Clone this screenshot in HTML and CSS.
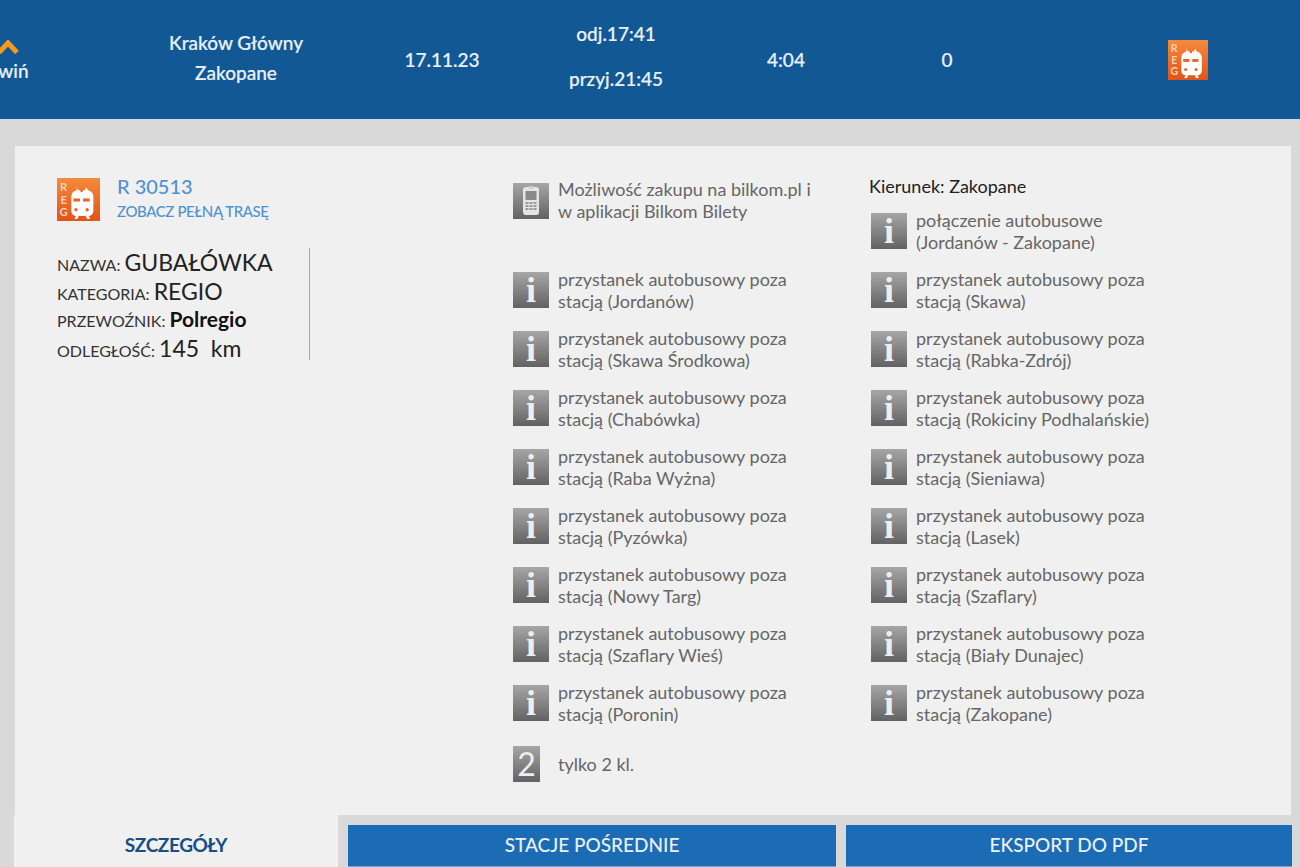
FILE: index.html
```html
<!DOCTYPE html>
<html lang="pl">
<head>
    <meta name="viewport" content="width=device-width, initial-scale=1.0">
    <meta charset="UTF-8">
    <title>Kraków Główny - Zakopane</title>
    <link rel="stylesheet" href="styles.css">
</head>
<body>
    <svg class="defs" width="0" height="0" aria-hidden="true">
        <defs>
            <linearGradient id="reg-bg" x1="0" y1="0" x2="0" y2="1">
                <stop offset="0" stop-color="#f58a3c"/>
                <stop offset="1" stop-color="#e2521a"/>
            </linearGradient>
            <symbol id="reg-icon" viewBox="0 0 42 42">
                <rect width="42" height="42" fill="url(#reg-bg)"/>
                <text x="6.5" y="13" class="reg-letter">R</text>
                <text x="6.5" y="25" class="reg-letter">E</text>
                <text x="6.5" y="37" class="reg-letter">G</text>
                <path d="M19 9l2 3h6l2-3 1 3h.5c3 1 5 3 5 6v14c0 3-2 5-4.500 5l1.500 3h-3l-1.500-3h-7L20 40h-3l1.500-3c-2.500 0-4.500-2-4.500-5V18c0-3 2-5 5-6h.500z" fill="#fff"/>
                <rect x="16" y="20" width="6.500" height="3" fill="#e8622a"/>
                <rect x="25.500" y="20" width="6.500" height="3" fill="#e8622a"/>
                <circle cx="24" cy="12.500" r="1.300" fill="#e8622a"/>
                <circle cx="18.500" cy="31" r="1.600" fill="#e8622a"/>
                <circle cx="29.500" cy="31" r="1.600" fill="#e8622a"/>
            </symbol>
        </defs>
    </svg>

    <header class="trip-bar">
        <div class="trip-cell toggle-cell">
            <svg class="chevron" width="24" height="16" viewBox="0 0 24 16">
                <path d="M3 13.500L12 4l9 9.500" fill="none" stroke="#f39a1e" stroke-width="5"/>
            </svg>
            <span>Zwiń</span>
        </div>
        <div class="trip-cell stations-cell">
            <span>Kraków Główny</span>
            <span>Zakopane</span>
        </div>
        <div class="trip-cell date-cell">17.11.23</div>
        <div class="trip-cell times-cell">
            <span>odj.17:41</span>
            <span>przyj.21:45</span>
        </div>
        <div class="trip-cell duration-cell">4:04</div>
        <div class="trip-cell changes-cell">0</div>
        <div class="trip-cell carrier-cell">
            <svg class="reg-small" width="40" height="40"><use href="#reg-icon"/></svg>
        </div>
    </header>

    <main class="details">
        <section class="train-col">
            <div class="train-head">
                <svg class="reg-big" width="43" height="43"><use href="#reg-icon"/></svg>
                <div class="train-links">
                    <a class="train-no">R 30513</a>
                    <a class="train-route">ZOBACZ PEŁNĄ TRASĘ</a>
                </div>
            </div>
            <dl class="train-info">
                <div><dt>NAZWA:</dt> <dd>GUBAŁÓWKA</dd></div>
                <div><dt>KATEGORIA:</dt> <dd>REGIO</dd></div>
                <div><dt>PRZEWOŹNIK:</dt> <dd class="carrier">Polregio</dd></div>
                <div><dt>ODLEGŁOŚĆ:</dt> <dd>145&nbsp; km</dd></div>
            </dl>
        </section>

        <section class="notes-col">
            <div class="note note-first">
                <span class="note-icon">
                    <svg width="22" height="30" viewBox="0 0 22 30">
                        <rect x="3" y="1" width="16" height="28" rx="3" fill="#e4e4e4"/>
                        <rect x="9" y="0" width="4" height="3" fill="#cfcfcf"/>
                        <rect x="5.500" y="5" width="11" height="9" fill="#8a8a8a"/>
                        <path d="M5.500 16h3v2h-3zM9.500 16h3v2h-3zM13.500 16h3v2h-3zM5.500 19h3v2h-3zM9.500 19h3v2h-3zM13.500 19h3v2h-3zM5.500 22h3v2h-3zM9.500 22h3v2h-3zM13.500 22h3v2h-3z" fill="#9a9a9a"/>
                    </svg>
                </span>
                <p>Możliwość zakupu na bilkom.pl i<br>w aplikacji Bilkom Bilety</p>
            </div>
            <div class="note"><span class="note-icon">i</span><p>przystanek autobusowy poza<br>stacją (Jordanów)</p></div>
            <div class="note"><span class="note-icon">i</span><p>przystanek autobusowy poza<br>stacją (Skawa Środkowa)</p></div>
            <div class="note"><span class="note-icon">i</span><p>przystanek autobusowy poza<br>stacją (Chabówka)</p></div>
            <div class="note"><span class="note-icon">i</span><p>przystanek autobusowy poza<br>stacją (Raba Wyżna)</p></div>
            <div class="note"><span class="note-icon">i</span><p>przystanek autobusowy poza<br>stacją (Pyzówka)</p></div>
            <div class="note"><span class="note-icon">i</span><p>przystanek autobusowy poza<br>stacją (Nowy Targ)</p></div>
            <div class="note"><span class="note-icon">i</span><p>przystanek autobusowy poza<br>stacją (Szaflary Wieś)</p></div>
            <div class="note"><span class="note-icon">i</span><p>przystanek autobusowy poza<br>stacją (Poronin)</p></div>
            <div class="note note-class"><span class="note-icon class-icon">2</span><p>tylko 2 kl.</p></div>
        </section>

        <section class="direction-col">
            <h4>Kierunek: Zakopane</h4>
            <div class="note"><span class="note-icon">i</span><p>połączenie autobusowe<br>(Jordanów - Zakopane)</p></div>
            <div class="note"><span class="note-icon">i</span><p>przystanek autobusowy poza<br>stacją (Skawa)</p></div>
            <div class="note"><span class="note-icon">i</span><p>przystanek autobusowy poza<br>stacją (Rabka-Zdrój)</p></div>
            <div class="note"><span class="note-icon">i</span><p>przystanek autobusowy poza<br>stacją (Rokiciny Podhalańskie)</p></div>
            <div class="note"><span class="note-icon">i</span><p>przystanek autobusowy poza<br>stacją (Sieniawa)</p></div>
            <div class="note"><span class="note-icon">i</span><p>przystanek autobusowy poza<br>stacją (Lasek)</p></div>
            <div class="note"><span class="note-icon">i</span><p>przystanek autobusowy poza<br>stacją (Szaflary)</p></div>
            <div class="note"><span class="note-icon">i</span><p>przystanek autobusowy poza<br>stacją (Biały Dunajec)</p></div>
            <div class="note"><span class="note-icon">i</span><p>przystanek autobusowy poza<br>stacją (Zakopane)</p></div>
        </section>
    </main>

    <nav class="tabs">
        <a class="tab tab-active">SZCZEGÓŁY</a>
        <a class="tab tab-stations">STACJE POŚREDNIE</a>
        <a class="tab tab-pdf">EKSPORT DO PDF</a>
    </nav>
</body>
</html>
```

FILE: styles.css
```css
html, body {
    height: 867px;
    overflow: hidden;
}

body {
    margin: 0;
    font-family: Lato, "Open Sans", sans-serif;
    background-color: #d9d9d9;
    color: #222;
}

.defs {
    display: block;
    height: 0;
}

.reg-letter {
    font-family: Lato, sans-serif;
    font-size: 11px;
    font-weight: 700;
    fill: #fbd3b5;
    text-anchor: middle;
}

.trip-bar {
    display: flex;
    align-items: center;
    height: 119px;
    background-color: #125894;
    border-bottom: 1px solid #cfd8df;
    box-sizing: content-box;
    color: #e9f1f7;
    font-size: 19px;
    font-weight: 500;
    text-align: center;
}

.trip-cell {
    display: flex;
    flex-direction: column;
    flex: none;
    -webkit-text-stroke: 0.2px #e9f1f7;
}

.toggle-cell {
    width: 80px;
    margin-left: -32px;
    margin-top: 2px;
    align-items: center;
    gap: 1px;
}

.chevron {
    margin-bottom: 3px;
}

.stations-cell {
    width: 200px;
    margin-left: 88px;
    gap: 7px;
    margin-top: -4px;
}

.date-cell {
    width: 100px;
    margin-left: 56px;
}

.times-cell {
    width: 120px;
    margin-left: 64px;
    gap: 22px;
    margin-top: -8px;
}

.duration-cell {
    width: 100px;
    margin-left: 60px;
}

.changes-cell {
    width: 100px;
    margin-left: 61px;
}

.carrier-cell {
    width: 60px;
    margin-left: 161px;
    align-items: center;
}

.details {
    display: flex;
    box-sizing: border-box;
    width: 1276px;
    height: 669px;
    margin: 26px 0 0 15px;
    padding-top: 32px;
    background-color: #f0f0f0;
}

.train-col {
    flex: none;
    width: 253px;
    margin-left: 42px;
}

.train-head {
    display: flex;
    gap: 17px;
}

.train-links {
    display: flex;
    flex-direction: column;
    margin-top: -4px;
}

.train-no {
    color: #4f93d1;
    font-size: 20px;
    line-height: 24px;
    font-weight: 500;
}

.train-route {
    margin-top: 3px;
    color: #4f93d1;
    font-size: 15px;
    line-height: 20px;
    letter-spacing: -0.4px;
    font-weight: 500;
}

.train-info {
    width: 252px;
    height: 112px;
    margin: 27px 0 0 0;
    border-right: 1px solid #a9a9a9;
}

.train-info div {
    height: 28.500px;
    line-height: 28px;
    white-space: nowrap;
}

.train-info dt {
    display: inline;
    font-size: 16px;
    color: #333;
}

.train-info dd {
    display: inline;
    margin: 0;
    font-size: 23px;
    color: #222;
}

.train-info .carrier {
    font-size: 21px;
    font-weight: 700;
    color: #111;
}

.notes-col {
    flex: none;
    width: 358px;
    margin-left: 203px;
}

.direction-col {
    flex: none;
    width: 400px;
}

.direction-col h4 {
    height: 31px;
    margin: 0 0 0 -2px;
    font-size: 18px;
    line-height: 16px;
    font-weight: 400;
    color: #222;
}

.note {
    display: flex;
    align-items: flex-start;
    gap: 9px;
    height: 59px;
}

.note p {
    margin: 0;
    font-size: 18px;
    line-height: 22px;
    color: #666;
    white-space: nowrap;
}

.note-first {
    height: 90px;
}

.note-icon {
    display: flex;
    align-items: center;
    justify-content: center;
    flex: none;
    width: 36px;
    height: 36px;
    margin-top: 4px;
    background: linear-gradient(#a6a6a6, #626262);
    color: #eee;
    font-family: "Liberation Serif", serif;
    font-size: 36px;
    font-weight: 700;
    line-height: 36px;
}

.note-first .note-icon {
    margin-top: 5px;
}

.note-class {
    align-items: center;
    height: 36px;
    margin-top: 6px;
    gap: 18px;
}

.class-icon {
    width: 27px;
    margin-top: 0;
    font-family: Lato, sans-serif;
    font-size: 32px;
    font-weight: 400;
}

.tabs {
    display: flex;
    margin-left: 14px;
    height: 52px;
}

.tab {
    display: block;
    box-sizing: border-box;
    flex: none;
    height: 42px;
    margin-top: 10px;
    margin-left: 10px;
    background-color: #1c6bb5;
    border-bottom: 1px solid #6ea7dc;
    color: #e9f1f7;
    font-size: 19px;
    font-weight: 500;
    line-height: 40px;
    text-align: center;
}

.tab-active {
    width: 324px;
    height: 52px;
    margin: 0;
    padding-top: 10px;
    background-color: #f0f0f0;
    border: 0;
    color: #174f85;
    font-weight: 700;
    letter-spacing: -0.4px;
}

.tab-stations {
    width: 488px;
}

.tab-pdf {
    width: 446px;
}
```
